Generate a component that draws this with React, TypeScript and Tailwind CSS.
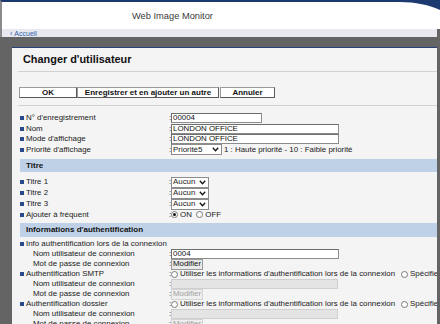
import React from "react";

const FONT = "font-['Liberation_Sans',Arial,sans-serif]";

function Bullet() {
  return <span className="inline-block w-[4px] h-[4px] bg-[#28498a] mr-[2px] shrink-0" />;
}

function Row({
  label,
  bullet,
  indent,
  h,
  children,
}: {
  label: string;
  bullet?: boolean;
  indent?: boolean;
  h: string;
  children?: React.ReactNode;
}) {
  return (
    <div className={`flex items-center ${h} whitespace-nowrap`}>
      <div className={`w-[149px] shrink-0 flex items-center ${indent ? "pl-[13px]" : ""}`}>
        {bullet && <Bullet />}
        <span>{label}</span>
      </div>
      {children !== undefined && <span className="w-[2px] shrink-0 leading-none">:</span>}
      <div className="flex items-center">{children}</div>
    </div>
  );
}

function TextInput({ value, w }: { value: string; w: string }) {
  return (
    <div
      className={`${w} h-[10px] bg-white border border-[#8c8c8c] border-t-[#6e6e6e] border-l-[#6e6e6e] flex items-center pl-[1px] text-[#111] leading-none`}
    >
      {value}
    </div>
  );
}

function DisabledInput() {
  return <div className="w-[167px] h-[10px] bg-[#e4e4e4] border border-[#cfcfcf]" />;
}

function Select({ value, w }: { value: string; w: string }) {
  return (
    <div
      className={`${w} h-[11px] bg-white border border-[#8c8c8c] flex items-center justify-between pl-[1px] pr-[2px] leading-none`}
    >
      <span>{value}</span>
      <svg width="7" height="5" viewBox="0 0 7 5">
        <path d="M0.8 0.8 L3.5 3.7 L6.2 0.8" fill="none" stroke="#111" strokeWidth="1.3" />
      </svg>
    </div>
  );
}

function Radio({ checked }: { checked?: boolean }) {
  return (
    <span className="w-[7px] h-[7px] rounded-full border border-[#7a7a7a] bg-white flex items-center justify-center shrink-0">
      {checked && <span className="w-[3px] h-[3px] rounded-full bg-[#111]" />}
    </span>
  );
}

function ModButton({ disabled }: { disabled?: boolean }) {
  return (
    <div
      className={`h-[11px] px-[1px] flex items-center leading-none border ${
        disabled
          ? "bg-[#efefef] border-[#d4d4d4] text-[#a0a0a0]"
          : "bg-[#e9e9e9] border-[#9a9a9a] text-[#111]"
      }`}
    >
      Modifier
    </div>
  );
}

function SectionBar({ title, h }: { title: string; h: string }) {
  return (
    <div className={`${h} bg-[#bfd1e7] flex items-center pl-[6px] font-bold text-[8px] text-[#111]`}>
      {title}
    </div>
  );
}

function RadioUse() {
  return (
    <div className="flex items-center gap-[2px] whitespace-nowrap">
      <Radio />
      <span>Utiliser les informations d'authentification lors de la connexion</span>
      <span className="w-[2px]" />
      <Radio />
      <span>Spécifier</span>
    </div>
  );
}

export default function App() {
  return (
    <div className={`w-[440px] h-[324px] overflow-hidden relative flex flex-col bg-[#646464] ${FONT}`}>
      {/* header */}
      <div className="h-[29px] shrink-0 bg-white border-t-2 border-[#1d3a70] border-l-2 border-l-[#8a8a8a] relative">
        <div className="absolute left-[130px] top-[10px] text-[9.3px] text-[#3a3a3a] leading-none">
          Web Image Monitor
        </div>
        <svg className="absolute right-0 top-[-2px]" width="40" height="12" viewBox="0 0 40 12">
          <path d="M0 0 L40 0 L40 10 C30 5 15 2 0 2 Z" fill="#1d3a70" />
        </svg>
      </div>
      {/* nav */}
      <div className="h-[8px] shrink-0 bg-[#e7e8f0] border-l-2 border-l-[#8a8a8a] flex items-center pl-[8px] mr-[3px] text-[7px] text-[#2f5fa8] leading-none">
        <span className="mr-[2px]">‹</span>
        <span>Accueil</span>
      </div>
      {/* overlay area */}
      <div className="flex-1 pt-[10px] pl-[12px] pr-[3px] flex flex-col">
        <div className="flex-1 bg-[#f4f4f4] border-t border-[#2a3f7a] overflow-hidden text-[7.9px] text-[#1a1a1a]">
          {/* heading */}
          <div className="ml-[6px] h-[24px] border-b border-[#d2d2d2] flex items-center pl-[5px]">
            <span className="font-bold text-[10.9px] text-[#111] leading-none">Changer d'utilisateur</span>
          </div>
          {/* buttons */}
          <div className="ml-[6px] border-b border-[#d2d2d2] pt-[15px] pb-[7px]">
            <div className="flex ml-[1px] h-[11px] font-bold text-[8px] leading-none text-[#111]">
              <div className="w-[58px] bg-white border border-[#9a9a9a] border-r-[#5a5a5a] border-b-[#5a5a5a] flex items-center justify-center">
                OK
              </div>
              <div className="w-[142px] bg-white border border-[#9a9a9a] border-r-[#5a5a5a] border-b-[#5a5a5a] flex items-center justify-center">
                Enregistrer et en ajouter un autre
              </div>
              <div className="ml-[1px] w-[55px] bg-white border border-[#9a9a9a] border-r-[#5a5a5a] border-b-[#5a5a5a] flex items-center justify-center">
                Annuler
              </div>
            </div>
          </div>
          {/* content */}
          <div className="ml-[8px] pt-[7px]">
            <Row label="N° d'enregistrement" bullet h="h-[10.5px]">
              <TextInput value="00004" w="w-[91px]" />
            </Row>
            <Row label="Nom" bullet h="h-[10.5px]">
              <TextInput value="LONDON OFFICE" w="w-[168px]" />
            </Row>
            <Row label="Mode d'affichage" bullet h="h-[10.5px]">
              <TextInput value="LONDON OFFICE" w="w-[168px]" />
            </Row>
            <Row label="Priorité d'affichage" bullet h="h-[10.5px]">
              <Select value="Priorité5" w="w-[51px]" />
              <span className="ml-[2px]">1 : Haute priorité - 10 : Faible priorité</span>
            </Row>
            <div className="h-[4px]" />
            <SectionBar title="Titre" h="h-[13px]" />
            <div className="h-[4.5px]" />
            <Row label="Titre 1" bullet h="h-[11px]">
              <Select value="Aucun" w="w-[38px]" />
            </Row>
            <Row label="Titre 2" bullet h="h-[11px]">
              <Select value="Aucun" w="w-[38px]" />
            </Row>
            <Row label="Titre 3" bullet h="h-[11px]">
              <Select value="Aucun" w="w-[38px]" />
            </Row>
            <Row label="Ajouter à fréquent" bullet h="h-[10.5px]">
              <div className="flex items-center gap-[2px]">
                <Radio checked />
                <span>ON</span>
                <span className="w-[0.5px]" />
                <Radio />
                <span>OFF</span>
              </div>
            </Row>
            <div className="h-[2.5px]" />
            <SectionBar title="Informations d'authentification" h="h-[14px]" />
            <div className="h-[2.5px]" />
            <Row label="Info authentification lors de la connexion" bullet h="h-[10px]" />
            <Row label="Nom utilisateur de connexion" indent h="h-[10px]">
              <TextInput value="0004" w="w-[168px]" />
            </Row>
            <Row label="Mot de passe de connexion" indent h="h-[10px]">
              <ModButton />
            </Row>
            <Row label="Authentification SMTP" bullet h="h-[10px]">
              <RadioUse />
            </Row>
            <Row label="Nom utilisateur de connexion" indent h="h-[10px]">
              <DisabledInput />
            </Row>
            <Row label="Mot de passe de connexion" indent h="h-[10px]">
              <ModButton disabled />
            </Row>
            <Row label="Authentification dossier" bullet h="h-[10px]">
              <RadioUse />
            </Row>
            <Row label="Nom utilisateur de connexion" indent h="h-[10px]">
              <DisabledInput />
            </Row>
            <Row label="Mot de passe de connexion" indent h="h-[10px]">
              <ModButton disabled />
            </Row>
          </div>
        </div>
        <div className="h-[2px] shrink-0 bg-[#3a3a3a] -ml-[12px] -mr-[3px]" />
      </div>
    </div>
  );
}
